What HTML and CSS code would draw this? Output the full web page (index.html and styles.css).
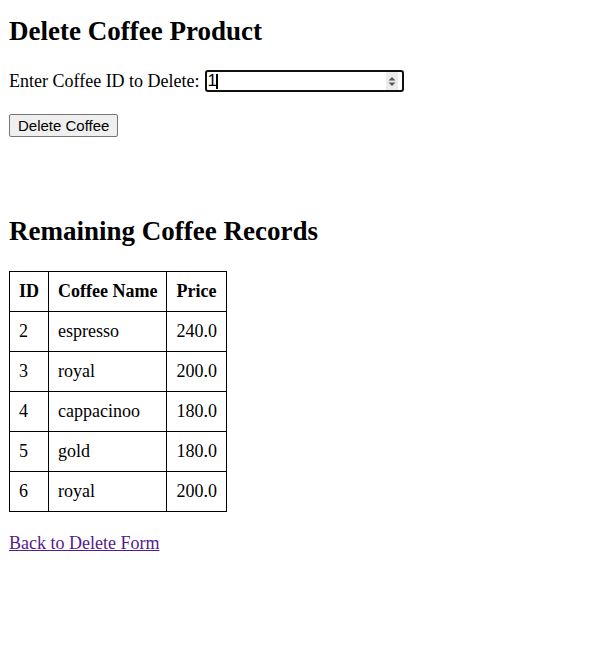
FILE: index.html
```html
<!DOCTYPE html>
<html>
<head>
<meta charset="utf-8">
<title>Delete Coffee</title>
<link rel="stylesheet" href="styles.css">
</head>
<body>
<h2 class="title title-top">Delete Coffee Product</h2>
<form class="form">
  <div class="form-row">
    <label for="cid" class="label">Enter Coffee ID to Delete:</label>
    <span class="input-wrap">
      <input id="cid" class="id-input" type="number" value="1">
      <span class="caret"></span>
      <span class="spin">
        <svg width="12" height="18" viewBox="0 0 12 18">
          <path d="M2.5 8.5 L6 5 L9.5 8.5 Z" fill="#555"/>
          <path d="M2.5 10.5 L6 14 L9.5 10.5 Z" fill="#555"/>
        </svg>
      </span>
    </span>
  </div>
  <button type="button" class="btn">Delete Coffee</button>
</form>
<h2 class="title title-records">Remaining Coffee Records</h2>
<table class="records">
  <tr><th>ID</th><th>Coffee Name</th><th>Price</th></tr>
  <tr><td>2</td><td>espresso</td><td>240.0</td></tr>
  <tr><td>3</td><td>royal</td><td>200.0</td></tr>
  <tr><td>4</td><td>cappacinoo</td><td>180.0</td></tr>
  <tr><td>5</td><td>gold</td><td>180.0</td></tr>
  <tr><td>6</td><td>royal</td><td>200.0</td></tr>
</table>
<p class="back"><a class="back-link" href="#">Back to Delete Form</a></p>
</body>
</html>
```
FILE: styles.css
```css
html, body {
  background: #fff;
}
body {
  margin: 0;
  padding: 0 9px;
  font-family: "Liberation Serif", "Times New Roman", serif;
  font-size: 18px;
  line-height: 21px;
  color: #000;
}
.title {
  font-size: 27px;
  line-height: 31px;
  font-weight: bold;
  margin: 0;
}
.title-top {
  margin-top: 16px;
}
.form {
  margin: 23px 0 0;
}
.form-row {
  display: flex;
  align-items: center;
  gap: 5px;
  height: 22px;
}
.label {
  white-space: nowrap;
}
.input-wrap {
  position: relative;
  display: block;
  width: 199px;
  height: 22px;
}
.id-input {
  display: block;
  width: 199px;
  height: 22px;
  box-sizing: border-box;
  margin: 0;
  padding: 0 0 0 1px;
  font-family: "Liberation Sans", Arial, sans-serif;
  font-size: 17px;
  color: #000;
  background: #fff;
  border: 2px solid #101010;
  border-radius: 3px;
  outline: none;
  caret-color: transparent;
  -moz-appearance: textfield;
}
.id-input::-webkit-inner-spin-button,
.id-input::-webkit-outer-spin-button {
  -webkit-appearance: none;
  margin: 0;
}
.caret {
  position: absolute;
  left: 11px;
  top: 4px;
  width: 2px;
  height: 15px;
  background: #000;
}
.spin {
  position: absolute;
  right: 6px;
  top: 2px;
  width: 12px;
  height: 18px;
  background: #ececec;
  display: block;
}
.spin svg {
  display: block;
}
.btn {
  display: block;
  margin: 22px 0 0;
  height: 23px;
  box-sizing: border-box;
  padding: 0 8px;
  font-family: "Liberation Sans", Arial, sans-serif;
  font-size: 15px;
  line-height: 19px;
  background: #efefef;
  border: 1px solid #767676;
  border-radius: 2px;
  color: #000;
}
.title-records {
  margin: 79px 0 24px;
}
.records {
  border-collapse: collapse;
}
.records th,
.records td {
  border: 1px solid #000;
  padding: 9px;
  line-height: 21px;
  text-align: left;
}
.back {
  margin: 21px 0 0;
}
.back-link {
  color: #551a8b;
}
```
